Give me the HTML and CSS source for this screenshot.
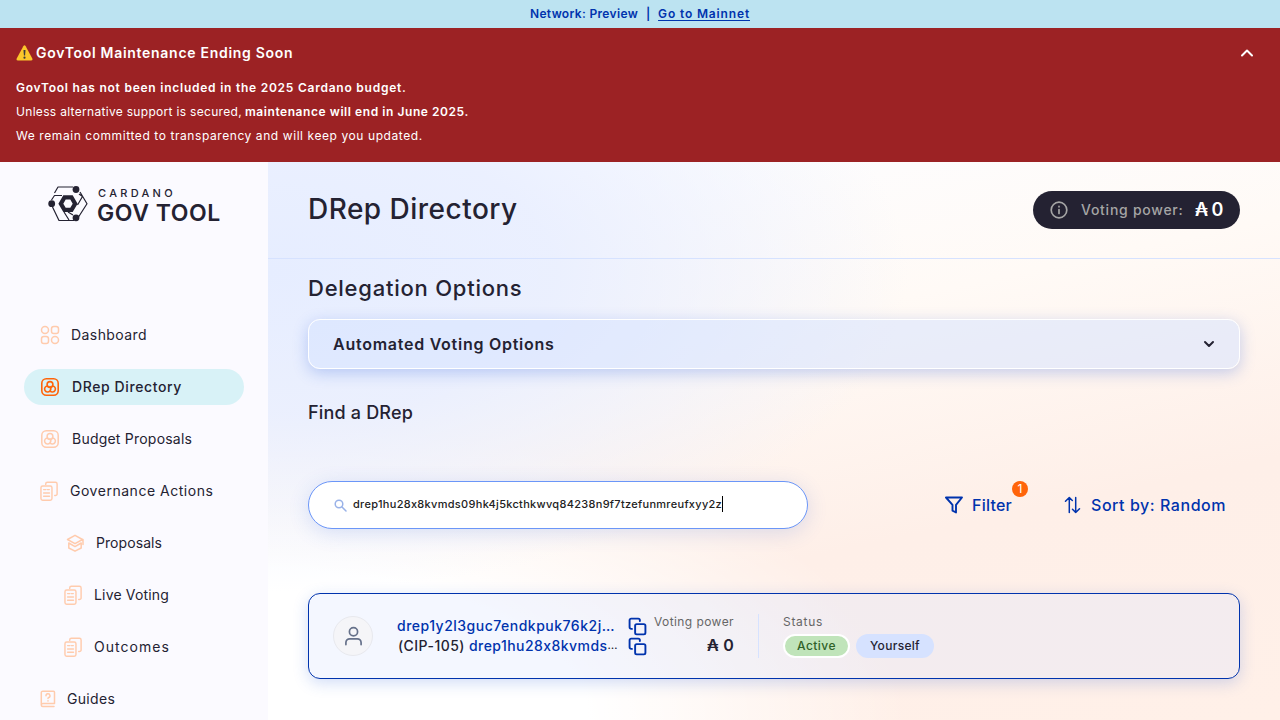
FILE: index.html
```html
<!DOCTYPE html>
<html lang="en">
<head>
<meta charset="utf-8">
<title>GovTool</title>
<link rel="stylesheet" href="styles.css">
</head>
<body>
<svg class="defs" width="0" height="0">
<symbol id="i-drep" viewBox="0 0 20 20"><rect x="1.800" y="1.800" width="16.400" height="16.400" rx="4.500"/><circle cx="10" cy="7.500" r="2.900"/><path d="M7.600 9A3 3 0 1 0 10 13.800 3.200 3.200 0 0 0 10 9.700M12.400 9A3 3 0 1 1 10 13.800"/></symbol>
<symbol id="i-docs" viewBox="0 0 20 22"><path d="M6 3.500V3a1.800 1.800 0 0 1 1.800-1.800h8.400A1.800 1.800 0 0 1 18 3v10.500a1.800 1.800 0 0 1-1.800 1.800H15.500"/><rect x="1" y="5.200" width="11.600" height="15" rx="1.800"/><path d="M3.800 9h2.400M7.800 9h2M3.800 12.500h6.200M3.800 16h6.200"/></symbol>
<symbol id="i-copy" viewBox="0 0 24 24"><rect x="9" y="9" width="13" height="13" rx="2"/><path d="M5 15H4a2 2 0 0 1-2-2V4a2 2 0 0 1 2-2h9a2 2 0 0 1 2 2v1"/></symbol>
</svg>
<div class="network"><b>Network: Preview</b><b class="bar">|</b><b class="link">Go to Mainnet</b></div>
<section class="alert">
<div class="alert-head"><svg class="warn" viewBox="0 0 17 16"><path d="M7.300 1.200Q8.500-.6 9.700 1.200L16.300 13.500Q17 15.500 15 15.600H2Q0 15.500.7 13.500Z" fill="#fcc72b"/><path d="M7.500 5h2l-.4 5.600H7.900z" fill="#3b3b3b"/><circle cx="8.500" cy="12.700" r="1.100" fill="#3b3b3b"/></svg><b>GovTool Maintenance Ending Soon</b><svg class="up" viewBox="0 0 14 10"><path d="M2 7.500 7 2.500l5 5"/></svg></div>
<p><b class="budget">GovTool has not been included in the 2025 Cardano budget.</b></p>
<p><span class="unless">Unless alternative support is secured,</span><b class="after">maintenance will end in June 2025.</b></p>
<p><span class="remain">We remain committed to transparency and will keep you updated.</span></p>
</section>
<div class="app">
<aside>
<div class="logo"><svg viewBox="0 0 40 36"><path d="M25 1H10L6.500 7M3.500 14 6.500 9.500H14M4.500 21 11 34.500H26M30.500 31 39 17.700 32 6M31 8 34.500 10.500 29.500 19M16 26l5 8M20 26l5 3"/><path class="fill" fill-rule="evenodd" d="M15.300 9.300h9.400l4.900 8.400-4.900 8.400h-9.400l-4.900-8.400ZM17.700 13.600 15.300 17.700l2.400 4.100h4.600l2.400-4.100-2.400-4.100Z"/><g class="fill"><circle cx="28" cy="3.500" r="3.400"/><circle cx="3.700" cy="17.700" r="3.400"/><circle cx="28" cy="31.800" r="3.400"/></g></svg><div class="brand"><span class="b1">CARDANO</span><span class="b2">GOV TOOL</span></div></div>
<nav>
<div class="item"><svg class="n1" viewBox="0 0 20 20"><circle cx="5" cy="5" r="3.500"/><rect x="11.500" y="1.500" width="7" height="7" rx="2.300"/><rect x="1.500" y="11.500" width="7" height="7" rx="2.300"/><circle cx="15" cy="15" r="3.500"/></svg><span>Dashboard</span></div>
<div class="item on"><svg><use href="#i-drep"/></svg><span>DRep Directory</span></div>
<div class="item budget-item"><svg><use href="#i-drep"/></svg><span>Budget Proposals</span></div>
<div class="item actions"><svg class="doc"><use href="#i-docs"/></svg><span>Governance Actions</span></div>
<div class="item sub proposals"><svg class="cap" viewBox="0 0 20 20"><path d="M10 2.300 17.500 6.500 10 10.700 2.500 6.500ZM3.800 10v5L10 18.200l6.200-3.200v-5L10 13.600ZM18 6.500V11.500"/></svg><span>Proposals</span></div>
<div class="item sub live"><svg class="doc"><use href="#i-docs"/></svg><span>Live Voting</span></div>
<div class="item sub outcomes"><svg class="doc"><use href="#i-docs"/></svg><span>Outcomes</span></div>
<div class="item guides"><svg class="guide" viewBox="0 0 16 18"><path d="M3 1.200h10.500a1 1 0 0 1 1 1V13.500H3a1.500 1.500 0 0 0-1.700 1.400V2.700A1.500 1.500 0 0 1 3 1.200ZM1.300 15a1.500 1.500 0 0 0 1.500 1.500H14M6 5.800a2 2 0 1 1 2.500 1.800c-.5.200-.5.500-.5 1M8 10.800v.2"/></svg><span>Guides</span></div>
</nav>
</aside>
<main>
<header><h1>DRep Directory</h1>
<div class="power"><svg viewBox="0 0 18 18"><circle cx="9" cy="9" r="7.800"/><path d="M9 8.500v4M9 5.400v.4"/></svg><span class="pl">Voting power:</span><b>₳ 0</b></div></header>
<div class="content">
<h2>Delegation Options</h2>
<div class="accordion"><b>Automated Voting Options</b><svg viewBox="0 0 12 8"><path d="M2 2 6 6l4-4"/></svg></div>
<h3>Find a DRep</h3>
<div class="tools"><div class="search"><svg viewBox="0 0 13 13"><circle cx="5" cy="5" r="3.800"/><path d="m8 8 4 4"/></svg><span>drep1hu28x8kvmds09hk4j5kcthkwvq84238n9f7tzefunmreufxyy2z</span><i></i></div>
<div class="filter"><svg viewBox="0 0 20 20"><path d="M2 2.500h16l-6 7.300V17.500l-3.500-1.800V9.800Z"/></svg><span>Filter</span><em>1</em></div>
<div class="sort"><svg viewBox="0 0 17 18"><path d="M5.300 16.500v-15M1.500 5.300 5.300 1.500l3 3M11.700 1.500v15M8.500 13.300l3.200 3.200 3.800-3.800"/></svg><span>Sort by: Random</span></div></div>
<div class="card"><div class="avatar"><svg viewBox="0 0 20 20"><circle cx="10" cy="5.500" r="4.300"/><path d="M2 19v-2a4 4 0 0 1 4-4h8a4 4 0 0 1 4 4v2"/></svg></div>
<div class="ids"><div><span class="blue">drep1y2l3guc7endkpuk76k2j…</span><svg><use href="#i-copy"/></svg></div><div><span class="cip">(CIP-105)</span><span class="blue cip-id">drep1hu28x8kvmds</span><span class="dots">…</span><svg><use href="#i-copy"/></svg></div></div>
<div class="vp"><small>Voting power</small><b>₳ 0</b></div>
<div class="status"><small>Status</small><div><span class="active">Active</span><span class="self">Yourself</span></div></div></div>
</div></main></div>
</body></html>
```
FILE: styles.css
```css
* { box-sizing: border-box; }
body { margin: 0; width: 1280px; height: 720px; overflow: hidden; font-family: Inter, "Liberation Sans", sans-serif; color: #242232; font-size: 14px; }
h1, h2, h3, p { margin: 0; font-weight: 500; white-space: nowrap; }
b { font-weight: 600; }
span, b, small { white-space: nowrap; }
svg { fill: none; stroke: currentColor; flex: none; stroke-linecap: round; stroke-linejoin: round; }
.defs { position: absolute; }
.network { height: 28px; background: #bce3f1; color: #0033ad; display: flex; align-items: center; padding: 0 0 2px 530px; font-size: 12px; letter-spacing: .33px; }
.network .bar { width: 20px; text-align: center; letter-spacing: 0; }
.network .link { letter-spacing: .85px; text-decoration: underline; text-decoration-thickness: 1px; text-underline-offset: 2px; }
.alert { height: 134px; background: #9c2224; color: #fff; padding: 12px 16px; font-size: 12px; }
.alert-head { height: 26px; display: flex; align-items: center; font-size: 14px; margin-bottom: 10px; letter-spacing: .71px; }
.alert-head b { padding-bottom: 2px; }
.warn { width: 17px; height: 16px; stroke: none; margin-right: 3px; }
.up { width: 14px; height: 10px; stroke-width: 2; margin-left: auto; margin-right: 10px; }
.alert p { height: 24px; line-height: 24px; font-weight: 400; display: flex; }
.budget { letter-spacing: .76px; }
.unless { letter-spacing: .31px; }
.after { margin-left: 3px; letter-spacing: .56px; }
.remain { letter-spacing: .58px; }
.app { display: flex; height: 558px; }
aside { width: 268px; background: #fbfaff; padding: 24px 24px 0; }
.logo { display: flex; height: 40px; padding-left: 24px; }
.logo svg { width: 40px; height: 36px; margin-right: 9px; stroke-width: 1.200; stroke-linecap: butt; }
.fill { fill: #242232; stroke: none; }
.brand { display: flex; flex-direction: column; }
.b1 { font-size: 11px; line-height: 15px; font-weight: 500; padding-left: 1px; letter-spacing: 3.300px; }
.b2 { font-size: 23px; line-height: 24px; font-weight: 600; letter-spacing: .55px; }
nav { margin-top: 91px; display: flex; flex-direction: column; gap: 16px; }
.item { height: 36px; border-radius: 18px; display: flex; align-items: center; padding-left: 16px; letter-spacing: .43px; }
.item span { padding-bottom: 2px; }
.item svg { width: 20px; height: 20px; margin-right: 12px; color: #ffcbad; stroke-width: 1.500; }
.item .n1 { margin-right: 11px; }
.item .doc { width: 19px; height: 21px; margin-right: 11px; }
.item .cap { margin-right: 11px; margin-left: 1px; }
.item .guide { width: 16px; height: 18px; margin-right: 11px; }
.item.on { background: #d8f2f7; font-weight: 500; letter-spacing: .6px; }
.item.on svg { color: #ff640a; stroke-width: 1.600; }
.item.budget-item { letter-spacing: .22px; }
.item.actions { letter-spacing: .52px; }
.item.sub { padding-left: 40px; }
.item.proposals { letter-spacing: .07px; }
.item.live { letter-spacing: .17px; }
.item.outcomes { letter-spacing: 1.040px; }
.item.guides { letter-spacing: .32px; }
main { flex: 1; background: radial-gradient(ellipse 640px 320px at 0 110px, #e6edff 0, #e8eeffdd 45%, #e8eeff00 100%), radial-gradient(ellipse 640px 300px at 0 100%, #fff 0, #fff 50%, #fff0 100%), linear-gradient(168deg, #fdfdff 10%, #fffaf6 35%, #feefe8 66%, #fff0e8 100%); }
header { height: 97px; border-bottom: 1px solid #d6e2ff; padding: 0 40px; display: flex; align-items: center; justify-content: space-between; }
h1 { font-size: 28px; line-height: 36px; letter-spacing: .48px; padding-bottom: 2px; }
.power { width: 207px; height: 38px; border-radius: 19px; background: #242232; color: #fff; display: flex; align-items: center; padding-left: 17px; }
.power svg { width: 18px; height: 18px; color: #a5a5a5; stroke-width: 1.700; margin-right: 13px; }
.pl { width: 102px; color: #a5a5a5; font-weight: 500; margin-right: 12px; letter-spacing: .74px; padding-bottom: 2px; }
.power b { font-size: 18px; letter-spacing: -.51px; padding-bottom: 1px; }
.content { padding: 13px 40px 0; }
h2 { font-size: 22px; line-height: 32px; letter-spacing: .76px; }
.accordion { margin-top: 15px; height: 50px; border: 1px solid #fff; border-radius: 12px; background: #d6e2ff88; box-shadow: 0 4px 15px #2f62dc47; display: flex; align-items: center; justify-content: space-between; padding: 0 24px; font-size: 16px; letter-spacing: .74px; }
.accordion b { padding-bottom: 1px; }
.accordion svg { width: 12px; height: 8px; stroke-width: 2; }
h3 { margin-top: 30px; font-size: 18px; line-height: 28px; letter-spacing: .18px; }
.tools { margin-top: 54px; display: flex; align-items: center; height: 48px; color: #0033ad; font-size: 16px; font-weight: 500; }
.search { width: 500px; height: 48px; border-radius: 24px; border: 1px solid #6b96f8; background: #fff; box-shadow: 0 4px 20px #2f62dc2b; padding-left: 25px; display: flex; align-items: center; font-size: 11px; color: #222; letter-spacing: .3px; }
.search span { padding-bottom: 2px; }
.search svg { width: 13px; height: 13px; color: #99b2e8; stroke-width: 1.500; margin-right: 6px; }
.search i { width: 1px; height: 16px; background: #000; margin-bottom: 2px; }
.filter { margin-left: 136px; width: 84px; height: 30px; display: flex; align-items: center; position: relative; letter-spacing: .23px; }
.filter span, .sort span { padding-bottom: 1px; }
.filter svg { width: 20px; height: 20px; margin-right: 8px; stroke-width: 1.900; }
.filter em { position: absolute; left: 68px; top: -9px; width: 16px; height: 16px; border-radius: 8px; background: #ff640a; color: #fff; font: 12px/16px Inter, sans-serif; text-align: center; }
.sort { margin-left: 36px; display: flex; align-items: center; letter-spacing: .55px; }
.sort svg { width: 17px; height: 18px; stroke-width: 1.500; margin-right: 10px; }
.card { margin-top: 64px; height: 86px; border: 1px solid #0033ad; border-radius: 12px; background: #dae5ff4d; box-shadow: 0 4px 15px #2f62dc38; display: flex; padding: 0 24px; }
.avatar { width: 40px; height: 40px; margin: 22px 24px 0 0; border-radius: 20px; background: #f5f5f8; border: 1px solid #e8e9ee; display: flex; align-items: center; justify-content: center; color: #66718a; }
.avatar svg { width: 19px; height: 20px; stroke-width: 1.800; }
.ids { width: 257px; padding-top: 22px; font-weight: 500; letter-spacing: .5px; }
.ids > div { height: 20px; display: flex; align-items: center; }
.ids span { padding-bottom: 2px; }
.ids svg { width: 19px; height: 19px; color: #0033ad; stroke-width: 2.400; margin: 0 7px 0 auto; }
.blue { color: #0033ad; }
.cip { margin: 0 4px 0 1px; letter-spacing: .46px; }
.cip-id { letter-spacing: .44px; }
.dots { font-size: 11px; letter-spacing: 0; }
.vp { width: 105px; height: 44px; margin-top: 20px; border-right: 1px solid #d6e2ff; padding-right: 24px; display: flex; flex-direction: column; align-items: flex-end; }
small { font-size: 12px; line-height: 16px; font-weight: 400; color: #666; letter-spacing: .42px; }
.vp b { font-size: 16px; line-height: 20px; margin-top: 5px; letter-spacing: .26px; }
.status { margin: 20px 0 0 24px; display: flex; flex-direction: column; align-items: flex-start; font-size: 12px; font-weight: 500; }
.status small { letter-spacing: .7px; }
.status > div { display: flex; gap: 6px; margin-top: 4px; }
.active, .self { height: 24px; border-radius: 12px; display: flex; align-items: center; justify-content: center; padding-bottom: 1px; letter-spacing: .31px; }
.active { width: 67px; background: #c0e4ba; border: 2px solid #fff; color: #2f6128; letter-spacing: .47px; }
.self { width: 78px; background: #d6e2ff; }
```
